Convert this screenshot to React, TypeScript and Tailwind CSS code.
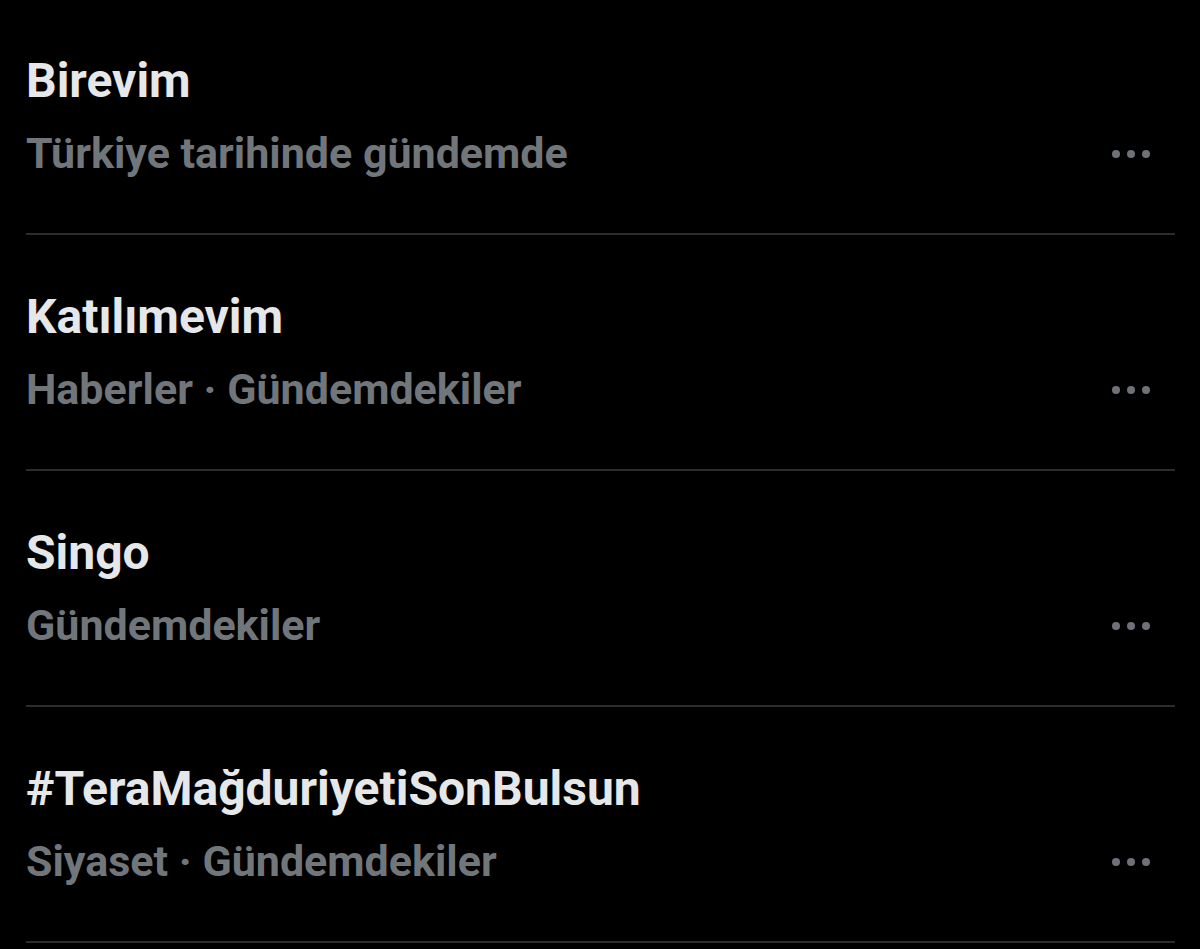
import React from 'react';

interface Trend {
  title: string;
  meta: string;
}

const trends: Trend[] = [
  { title: 'Birevim', meta: 'Türkiye tarihinde gündemde' },
  { title: 'Katılımevim', meta: 'Haberler · Gündemdekiler' },
  { title: 'Singo', meta: 'Gündemdekiler' },
  { title: '#TeraMağduriyetiSonBulsun', meta: 'Siyaset · Gündemdekiler' },
];

const MoreDots = () => (
  <svg width="40" height="10" viewBox="0 0 40 10" className="shrink-0">
    <circle cx="5" cy="5" r="4" fill="#6e7277" />
    <circle cx="20" cy="5" r="4" fill="#6e7277" />
    <circle cx="35" cy="5" r="4" fill="#6e7277" />
  </svg>
);

const TrendRow: React.FC<{ trend: Trend }> = ({ trend }) => (
  <div className="pb-px">
    <div className="h-[233px] pt-[57px]">
      <div className="text-[48px] leading-[48px] font-bold text-[#e6e7e8]">{trend.title}</div>
      <div className="flex items-center justify-between mt-[27px] pr-[24px]">
        <div className="text-[43px] leading-[43px] font-bold text-[#71767b]">{trend.meta}</div>
        <MoreDots />
      </div>
    </div>
    <div className="h-[2px] bg-[#2a2c2e]" />
  </div>
);

export default function App() {
  return (
    <div
      className="min-h-screen w-full bg-black overflow-hidden pl-[26px] pr-[25px]"
      style={{ fontFamily: 'Roboto, "Liberation Sans", sans-serif' }}
    >
      {trends.map((t) => (
        <TrendRow key={t.title} trend={t} />
      ))}
    </div>
  );
}
